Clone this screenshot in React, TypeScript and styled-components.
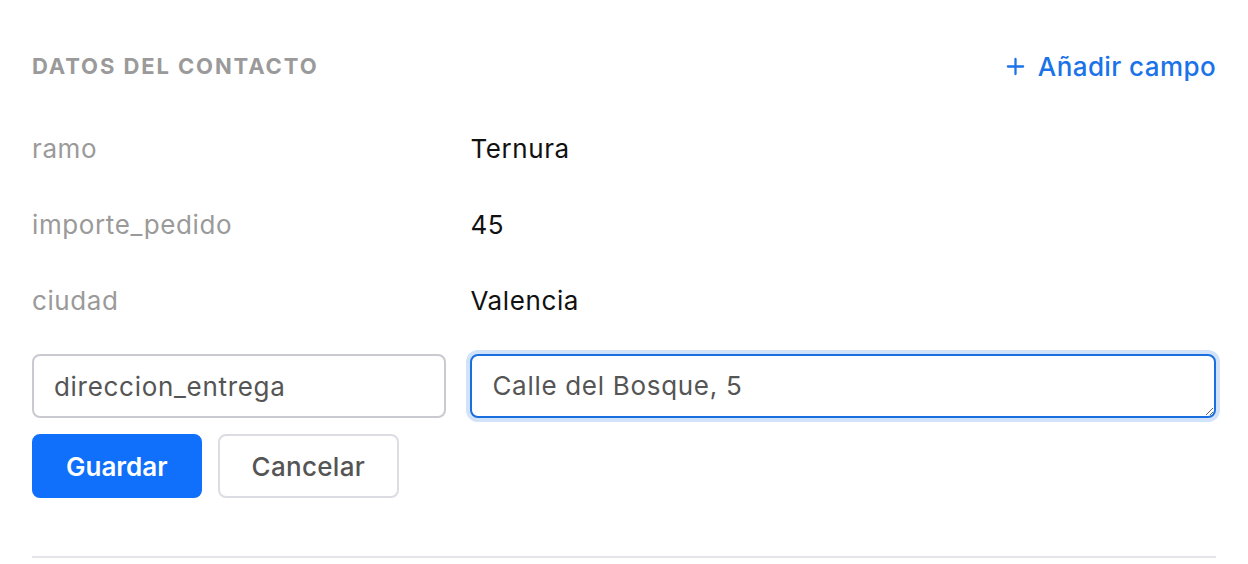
import React, { useState } from 'react';
import styled, { createGlobalStyle } from 'styled-components';

const GlobalStyle = createGlobalStyle`
  body {
    margin: 0;
    background: #ffffff;
    font-family: Inter, "Liberation Sans", Arial, sans-serif;
  }
`;

const Section = styled.section`
  margin: 0 32px;
  padding: 32px 0 58px;
  border-bottom: 2px solid #e4e6ea;
`;

const Header = styled.div`
  display: flex;
  align-items: center;
  justify-content: space-between;
  height: 68px;
  margin-bottom: 10px;
`;

const Title = styled.h3`
  margin: 0;
  font-size: 22px;
  font-weight: 700;
  letter-spacing: 1.9px;
  color: #9a9a9a;
  text-transform: uppercase;
`;

const AddButton = styled.button`
  display: flex;
  align-items: center;
  gap: 13px;
  padding: 0;
  border: none;
  background: none;
  color: #1a73e8;
  font-family: inherit;
  font-size: 26px;
  font-weight: 500;
  letter-spacing: 0.4px;
  cursor: pointer;
`;

const Row = styled.div`
  display: grid;
  grid-template-columns: 35% 1fr;
  column-gap: 24px;
  align-items: center;
  height: 76px;
  font-size: 26px;
  letter-spacing: 0.6px;
`;

const Key = styled.span`
  color: #9a9a9a;
`;

const Value = styled.span`
  color: #111111;
`;

const EditRow = styled.div`
  display: grid;
  grid-template-columns: 35% 1fr;
  column-gap: 24px;
  margin-top: 16px;
`;

const fieldBase = `
  box-sizing: border-box;
  height: 64px;
  width: 100%;
  padding: 0 20px;
  border-radius: 8px;
  font-family: inherit;
  font-size: 26px;
  letter-spacing: 0.7px;
  color: #555555;
  background: #ffffff;
  outline: none;
`;

const KeyInput = styled.input`
  ${fieldBase}
  border: 2px solid #c9cacf;
`;

const ValueArea = styled.textarea`
  ${fieldBase}
  padding-top: 14px;
  line-height: 32px;
  border: 2px solid #1a6fe0;
  box-shadow: 0 0 0 4px rgba(26, 111, 224, 0.2);
  resize: vertical;
`;

const Actions = styled.div`
  display: flex;
  gap: 16px;
  margin-top: 16px;
`;

const ActionButton = styled.button<{ $primary?: boolean }>`
  height: 64px;
  padding: 0 32px;
  border-radius: 8px;
  font-family: inherit;
  font-size: 26px;
  font-weight: ${({ $primary }) => ($primary ? 600 : 500)};
  letter-spacing: ${({ $primary }) => ($primary ? '0' : '0.3px')};
  cursor: pointer;
  border: 2px solid ${({ $primary }) => ($primary ? '#1070fc' : '#dcdde2')};
  background: ${({ $primary }) => ($primary ? '#1070fc' : '#ffffff')};
  color: ${({ $primary }) => ($primary ? '#ffffff' : '#555555')};
`;

const fields = [
  { key: 'ramo', value: 'Ternura' },
  { key: 'importe_pedido', value: '45' },
  { key: 'ciudad', value: 'Valencia' },
];

export default function App() {
  const [newKey, setNewKey] = useState('direccion_entrega');
  const [newValue, setNewValue] = useState('Calle del Bosque, 5');

  return (
    <>
      <GlobalStyle />
      <Section>
        <Header>
          <Title>Datos del contacto</Title>
          <AddButton type="button">
            <svg width="19" height="19" viewBox="0 0 20 20" fill="none" stroke="currentColor" strokeWidth="2.4" strokeLinecap="round">
              <path d="M10 2v16M2 10h16" />
            </svg>
            Añadir campo
          </AddButton>
        </Header>

        {fields.map((f) => (
          <Row key={f.key}>
            <Key>{f.key}</Key>
            <Value>{f.value}</Value>
          </Row>
        ))}

        <EditRow>
          <KeyInput value={newKey} onChange={(e) => setNewKey(e.target.value)} />
          <ValueArea rows={1} value={newValue} onChange={(e) => setNewValue(e.target.value)} />
        </EditRow>

        <Actions>
          <ActionButton type="button" $primary>Guardar</ActionButton>
          <ActionButton type="button">Cancelar</ActionButton>
        </Actions>
      </Section>
    </>
  );
}
